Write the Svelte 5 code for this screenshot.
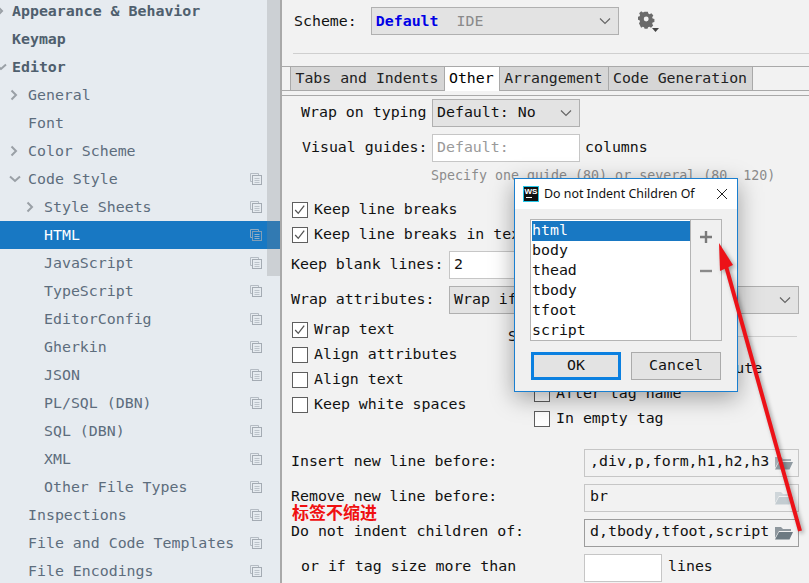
<script>
  const tree = [
    { t: 'Appearance & Behavior', l: 0, b: true, c: 'r' },
    { t: 'Keymap', l: 0, b: true },
    { t: 'Editor', l: 0, b: true, c: 'd' },
    { t: 'General', l: 1, c: 'r' },
    { t: 'Font', l: 1 },
    { t: 'Color Scheme', l: 1, c: 'r' },
    { t: 'Code Style', l: 1, c: 'd', i: true },
    { t: 'Style Sheets', l: 2, c: 'r', i: true },
    { t: 'HTML', l: 2, i: true, s: true },
    { t: 'JavaScript', l: 2, i: true },
    { t: 'TypeScript', l: 2, i: true },
    { t: 'EditorConfig', l: 2, i: true },
    { t: 'Gherkin', l: 2, i: true },
    { t: 'JSON', l: 2, i: true },
    { t: 'PL/SQL (DBN)', l: 2, i: true },
    { t: 'SQL (DBN)', l: 2, i: true },
    { t: 'XML', l: 2, i: true },
    { t: 'Other File Types', l: 2, i: true },
    { t: 'Inspections', l: 1, i: true },
    { t: 'File and Code Templates', l: 1, i: true },
    { t: 'File Encodings', l: 1, i: true }
  ];
  const tabs = ['Tabs and Indents', 'Other', 'Arrangement', 'Code Generation'];
  const leftChecks = [
    { t: 'Wrap text', on: true },
    { t: 'Align attributes' },
    { t: 'Align text' },
    { t: 'Keep white spaces' }
  ];
  const rightChecks = ['Around "=" in attribute', 'After tag name', 'In empty tag'];
  const tags = ['html', 'body', 'thead', 'tbody', 'tfoot', 'script'];
  const paths = [
    { l: 'Insert new line before:', v: ',div,p,form,h1,h2,h3', k: 'mid' },
    { l: 'Remove new line before:', v: 'br', k: 'faint' },
    { l: 'Do not indent children of:', v: 'd,tbody,tfoot,script', k: 'dark' }
  ];
</script>

{#snippet check(on, text)}
  <div class="chk">
    <span class="box">
      {#if on}
        <svg viewBox="0 0 16 16" width="14" height="14"><path d="M2.5 8 L6 11.8 L12.8 3" fill="none" stroke="#555" stroke-width="1.5" /></svg>
      {/if}
    </span>
    <span class="up">{text}</span>
  </div>
{/snippet}

{#snippet chevron()}
  <svg class="chev" viewBox="0 0 12 8" width="12" height="8"><path d="M1 1.5 L6 6.5 L11 1.5" fill="none" stroke="#666" stroke-width="1.2" /></svg>
{/snippet}

<div class="root">
  <aside class="side">
    {#each tree as r}
      <div class="row lvl{r.l}" class:bold={r.b} class:sel={r.s}>
        {#if r.c === 'r'}
          <svg class="tw" viewBox="0 0 10 12" width="10" height="12"><path d="M2.5 1.5 L7 6 L2.5 10.5" fill="none" stroke="#9aa0a6" stroke-width="2" /></svg>
        {:else if r.c === 'd'}
          <svg class="tw" viewBox="0 0 12 10" width="12" height="10"><path d="M1 2.5 L6 7 L11 2.5" fill="none" stroke="#9aa0a6" stroke-width="2" /></svg>
        {/if}
        <span class="lbl">{r.t}</span>
        {#if r.i}
          <svg class="cp" viewBox="0 0 12 12" width="12" height="12">
            <path d="M8.5 2.5 V0.5 H0.5 V8.5 H2.5" fill="none" stroke="#b4bbc3" />
            <rect x="2.5" y="2.5" width="9" height="9" fill="none" stroke="#a4abb3" />
            <path d="M4.5 5.5 H9.5 M4.5 7.5 H9.5 M4.5 9.5 H9.5" stroke="#bcc3ca" />
          </svg>
        {/if}
      </div>
    {/each}
    <div class="thumb"></div>
  </aside>

  <main class="main">
    <div class="scheme">
      <span>Scheme:</span>
      <div class="select schemesel">
        <b class="blue">Default</b><span class="ide">IDE</span>
        {@render chevron()}
      </div>
      <svg class="gear" viewBox="0 0 24 22" width="24" height="22">
        <path fill="#6b6b6b" fill-rule="evenodd" d="M8 2h4l.6 2.4 1.5.7 2.2-1.2 2.4 2.8-1.4 2 .5 1.6 2.2.7v3.6l-2.2.7-.5 1.6 1.2 2-2.6 2.6-2-1.2-1.6.6-.7 2.1H8l-.6-2.1-1.6-.6-2 1.2L1.200 16.200l1.200-2-.5-1.600-1.900-.7V8.300l2-.7.5-1.600L1.400 4 3.900 1.500 6 2.900 7.400 2.300zM10 8a3 3 0 1 0 0 6 3 3 0 0 0 0-6z" transform="translate(0 -1) scale(.82)" />
        <path fill="#444" d="M14 17h7l-3.500 4z" />
      </svg>
    </div>
    <div class="rule"></div>

    <div class="tabs">
      {#each tabs as t, i}
        <div class="tab" class:on={i === 1}>{t}</div>
      {/each}
    </div>
    <div class="tabline"></div>

    <div class="line wrapline">
      <span class="l1 up">Wrap on typing</span>
      <div class="select w147 boxup">Default: No{@render chevron()}</div>
    </div>
    <div class="line guides">
      <span class="l1 up">Visual guides:</span>
      <div class="input w147 ph boxup">Default:</div>
      <span class="cols up">columns</span>
    </div>
    <div class="hint">Specify one guide (80) or several (80, 120)</div>

    <div class="topchecks">
      {@render check(true, 'Keep line breaks')}
      {@render check(true, 'Keep line breaks in text')}
    </div>

    <div class="line blank">
      <span class="l2 up">Keep blank lines:</span>
      <div class="input w147 boxup">2</div>
    </div>
    <div class="line attr">
      <span class="l2 up">Wrap attributes:</span>
      <div class="select wide boxup">Wrap if long{@render chevron()}</div>
    </div>

    <div class="cols2">
      <div class="colL">
        {#each leftChecks as c}
          {@render check(c.on, c.t)}
        {/each}
      </div>
      <div class="colR">
        <div class="titled"><span class="up">Spaces</span><i></i></div>
        <div class="rchecks">
          {#each rightChecks as c}
            {@render check(false, c)}
          {/each}
        </div>
      </div>
    </div>

    <div class="paths">
      {#each paths as p}
        <div class="pathrow">
          <span class="up">{p.l}</span>
          <div class="input pathinput" class:dark={p.k === 'dark'}>
            <span class="pv">{p.v}</span>
            <svg class="folder {p.k}" viewBox="0 0 20 16" width="20" height="16">
              <path d="M1 2h6l2 2h8v2H5L1 13z" fill="currentColor" opacity=".75" />
              <path d="M5 7h14l-3.500 7.500H1z" fill="currentColor" />
            </svg>
          </div>
        </div>
      {/each}
      <div class="pathrow last">
        <span class="orif up">or if tag size more than</span>
        <div class="input num"></div>
        <span class="linesw up">lines</span>
      </div>
    </div>
  </main>

  <div class="note">标签不缩进</div>

  <div class="dialog">
    <div class="dtitle">
      <span class="ws"><b>WS</b><i></i></span>
      <span class="dt">Do not Indent Children Of</span>
      <svg class="x" viewBox="0 0 12 12" width="12" height="12"><path d="M1 1 L11 11 M11 1 L1 11" stroke="#222" stroke-width="1" /></svg>
    </div>
    <div class="dbody">
      <div class="listwrap">
        <div class="list">
          {#each tags as t, i}
            <div class="item" class:picked={i === 0}>{t}</div>
          {/each}
        </div>
        <div class="tools">
          <svg viewBox="0 0 14 14" width="14" height="14"><path d="M7 1 V13 M1 7 H13" stroke="#7a7a7a" stroke-width="2.400" /></svg>
          <svg viewBox="0 0 14 14" width="14" height="14"><path d="M1 7 H13" stroke="#8a8a8a" stroke-width="2.400" /></svg>
        </div>
      </div>
      <div class="btns">
        <div class="btn ok">OK</div>
        <div class="btn">Cancel</div>
      </div>
    </div>
  </div>

  <svg class="arrow" viewBox="0 0 809 583" width="809" height="583">
    <path d="M726 266 L800 531" fill="none" stroke="#ec1218" stroke-width="4" />
    <path d="M719 243 L720 271 L733 265 Z" fill="#ec1218" />
  </svg>
</div>

<style>
  :global(body) { margin: 0; background: #f2f2f2; }
  .root {
    position: relative;
    display: flex;
    width: 809px;
    height: 583px;
    overflow: hidden;
    font: 14.9px/18px "DejaVu Sans Mono", monospace;
    color: #111;
    background: #f2f2f2;
  }

  /* sidebar */
  .side {
    position: relative;
    flex: 0 0 280px;
    height: 583px;
    overflow: hidden;
    background: #e6ebf0;
    border-right: 2px solid #a9a9a9;
  }
  .row {
    position: relative;
    display: flex;
    align-items: center;
    height: 28px;
    color: #5d6d7d;
    white-space: nowrap;
  }
  .row:first-child { margin-top: -3px; }
  .row.bold { font-weight: 700; color: #4f5f6e; }
  .row.sel { background: #1878c3; color: #fff; }
  .sel .cp { opacity: 0.75; }
  .lvl0 { padding-left: 12px; }
  .lvl1 { padding-left: 28px; }
  .lvl2 { padding-left: 44px; }
  .tw { position: absolute; top: 50%; transform: translateY(-50%); }
  .lvl0 .tw { left: -5px; }
  .lvl1 .tw { left: 9px; }
  .lvl2 .tw { left: 25px; }
  .cp { position: absolute; left: 250px; top: 8px; }
  .thumb {
    position: absolute;
    top: 0;
    right: 0;
    width: 13px;
    height: 276px;
    background: rgba(128, 128, 128, 0.25);
  }

  /* main form */
  .main { flex: 1; min-width: 0; }
  .up { padding-bottom: 2px; }
  .boxup { padding-bottom: 2px; }
  .scheme {
    display: flex;
    align-items: center;
    height: 28px;
    margin-top: 7px;
    padding-left: 12px;
  }
  .select, .input {
    display: flex;
    align-items: center;
    box-sizing: border-box;
    height: 28px;
    padding-left: 4px;
    border: 1px solid #b0b0b0;
    background: #e3e3e3;
    white-space: nowrap;
    position: relative;
  }
  .input { background: #fff; border-color: #c6c6c6; }
  .schemesel { width: 248px; margin-left: 14px; }
  .blue { color: #0000e6; font-weight: 700; }
  .ide { margin-left: 18px; color: #8a8a8a; }
  .chev { position: absolute; right: 7px; top: 9px; }
  .gear { margin-left: 19px; margin-top: 1px; }
  .rule { height: 1px; margin: 18px 0 0 11px; background: #cfcfcf; }
  .tabs {
    display: flex;
    box-sizing: border-box;
    height: 25px;
    margin-top: 12px;
    padding-left: 8px;
    border-top: 1px solid #a9a9a9;
    border-bottom: 1px solid #a9a9a9;
  }
  .tab {
    display: flex;
    align-items: center;
    box-sizing: border-box;
    height: 23px;
    padding: 0 5px 2px 4.5px;
    background: #d6d6d6;
    border-left: 1px solid #a9a9a9;
    color: #222;
    font-size: 14.85px;
  }
  .tab:last-child { border-right: 1px solid #a9a9a9; }
  .tab.on { background: #fff; height: 24px; color: #000; padding-bottom: 3px; }
  .tabline { height: 1px; margin-top: 4px; background: #a9a9a9; }

  .line { display: flex; align-items: center; }
  .wrapline { margin-top: 3px; }
  .guides { margin-top: 7px; }
  .l1 { width: 150px; padding-left: 19px; flex: none; box-sizing: border-box; white-space: nowrap; }
  .guides .l1 { padding-left: 20px; }
  .l2 { width: 167px; padding-left: 9px; flex: none; box-sizing: border-box; white-space: nowrap; }
  .w147 { width: 148px; }
  .wide { width: 350px; }
  .ph { color: #9a9a9a; }
  .cols { margin-left: 5px; }
  .hint { margin: 5px 0 0 149px; color: #8c8c8c; white-space: nowrap; height: 18px; font-size: 13.3px; }

  .topchecks { margin-top: 12px; padding-left: 10px; }
  .chk {
    display: flex;
    align-items: center;
    height: 25px;
    white-space: nowrap;
  }
  .box {
    display: flex;
    align-items: center;
    justify-content: center;
    box-sizing: border-box;
    flex: none;
    width: 16px;
    height: 16px;
    margin-right: 6px;
    border: 1px solid #5e5e5e;
    background: #fff;
  }
  .blank { margin-top: 4px; }
  .attr { margin-top: 7px; }

  .cols2 { display: flex; margin-top: 3px; }
  .colL { width: 226px; flex: none; padding-left: 10px; box-sizing: border-box; }
  .colR { flex: 1; min-width: 0; }
  .titled { display: flex; align-items: center; height: 25px; margin-top: 7px; margin-right: 12px; }
  .titled i { flex: 1; height: 1px; margin-left: 6px; background: #cfcfcf; }
  .rchecks { margin-top: 7px; padding-left: 26px; }

  .paths { margin-top: 18px; padding: 0 10px 0 9px; }
  .pathrow {
    display: flex;
    align-items: center;
    justify-content: space-between;
    height: 28px;
    margin-bottom: 7px;
  }
  .pathrow .up { padding-bottom: 4px; }
  .pathrow.last { justify-content: flex-start; }
  .pathinput { width: 215px; padding: 0 0 4px 5px; background: #f2f2f2; }
  .pathinput.dark { border-color: #9c9c9c; }
  .pv { overflow: hidden; }
  .folder { position: absolute; right: 4px; top: 5px; }
  .folder.mid { color: #8f9aa1; }
  .folder.faint { color: #c3ccd1; }
  .folder.dark { color: #6d7a82; }
  .orif { width: 293px; padding-left: 10px; box-sizing: border-box; flex: none; }
  .num { width: 78px; }
  .linesw { margin-left: 6px; }

  /* annotation */
  .note {
    position: absolute;
    left: 292px;
    top: 502px;
    font: 700 17px/20px "Noto Sans CJK SC", sans-serif;
    color: #f01010;
  }

  /* dialog */
  .dialog {
    position: absolute;
    left: 514px;
    top: 178px;
    width: 224px;
    height: 214px;
    box-sizing: border-box;
    border: 1px solid #1a7fd0;
    background: #f0f0f0;
    box-shadow: 0 6px 22px rgba(0, 0, 0, 0.35);
  }
  .dtitle {
    position: relative;
    display: flex;
    align-items: center;
    height: 30px;
    background: #fff;
  }
  .ws {
    position: relative;
    box-sizing: border-box;
    width: 16px;
    height: 16px;
    margin-left: 8px;
    border: 1px solid #25c6e8;
    background: #111;
    color: #fff;
    overflow: hidden;
  }
  .ws b {
    display: block;
    font: 700 8px/9px "Liberation Sans", sans-serif;
    text-align: center;
  }
  .ws i { position: absolute; left: 2px; top: 10px; width: 6px; height: 1px; background: #fff; }
  .dt {
    margin-left: 5px;
    font: 12.4px/16px "Noto Sans", sans-serif;
    color: #111;
    white-space: nowrap;
  }
  .x { position: absolute; right: 9px; top: 9px; }
  .dbody { padding: 10px 15px 0 15px; }
  .listwrap {
    display: flex;
    box-sizing: border-box;
    width: 192px;
    height: 122px;
    border: 1px solid #b4b4b4;
    background: #fff;
  }
  .list { width: 160px; flex: none; padding: 1px 0 0 1px; box-sizing: border-box; border-right: 1px solid #b4b4b4; }
  .item { height: 20px; line-height: 18px; }
  .item.picked { background: #1878c3; color: #fff; }
  .tools {
    flex: 1;
    display: flex;
    flex-direction: column;
    align-items: center;
    gap: 20px;
    padding-top: 10px;
    background: #f0f0f0;
  }
  .btns { display: flex; justify-content: space-between; width: 190px; margin: 11px 0 0 1px; }
  .btn {
    display: flex;
    align-items: center;
    justify-content: center;
    box-sizing: border-box;
    width: 90px;
    height: 28px;
    padding-bottom: 2px;
    border: 1px solid #ababab;
    background: #e3e3e3;
  }
  .btn.ok { border: 3px solid #0b80e0; }

  .arrow {
    position: absolute;
    left: 0;
    top: 0;
    pointer-events: none;
    filter: drop-shadow(2px 2px 2px rgba(0, 0, 0, 0.35));
  }
</style>
